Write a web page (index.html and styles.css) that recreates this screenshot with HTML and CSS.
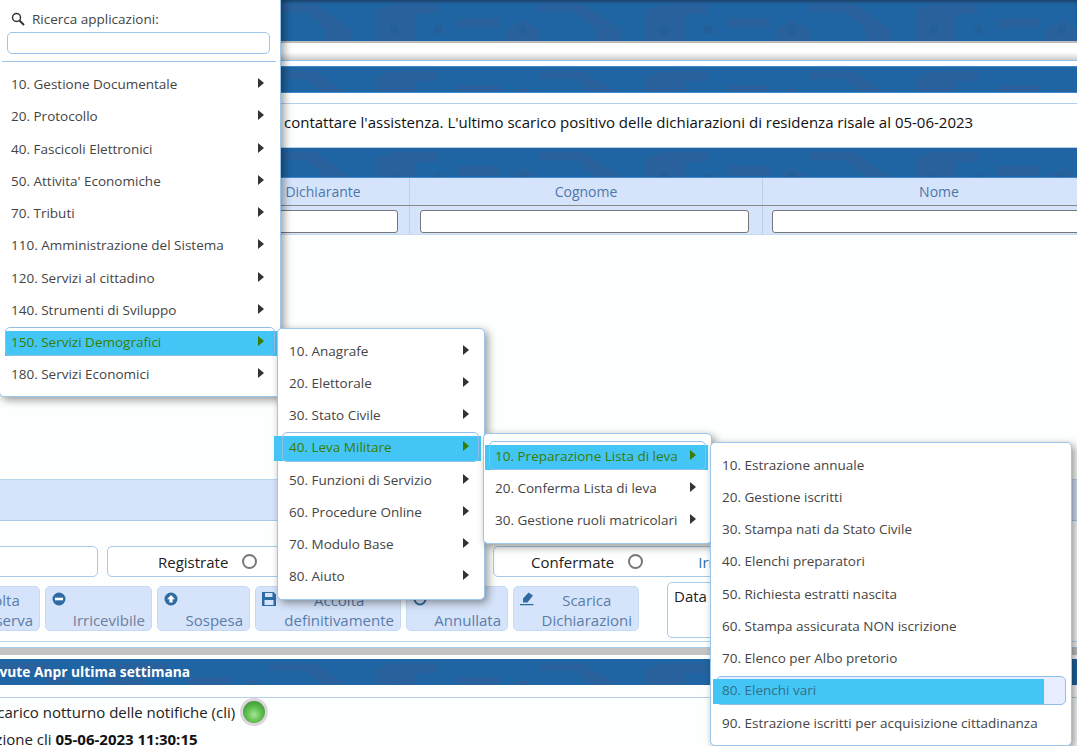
FILE: index.html
```html
<!DOCTYPE html>
<html>

<head>
    <title>Dichiarazioni di residenza</title>
    <meta name="viewport" content="width=device-width, initial-scale=1">
    <link rel="stylesheet" href="styles.css">
</head>

<body>

    <svg class="svg-defs" width="0" height="0">
        <defs>
            <pattern id="skyline" width="270" height="41" patternUnits="userSpaceOnUse">
                <path fill="#28619b" d="M0 4H44L82 30V41H56V30L36 12H0Z" />
                <path fill="#28619b" d="M106 10L124 4H168V14H146V41H106Z" />
                <path fill="#28619b" d="M188 18H230V28H188Z" />
                <path fill="#28619b" d="M236 30L252 20L270 30V41H236Z" />
                <circle fill="#235f98" cx="124" cy="30" r="5" />
                <circle fill="#235f98" cx="168" cy="30" r="5" />
                <circle fill="#235f98" cx="252" cy="30" r="5" />
            </pattern>
        </defs>
    </svg>

    <div class="band band-top"><svg class="band-art"><rect width="100%" height="100%" fill="url(#skyline)" /></svg></div>
    <div class="top-strip"></div>

    <div class="band band-title"><svg class="band-art"><rect width="100%" height="100%" fill="url(#skyline)" /></svg></div>

    <div class="message">contattare l'assistenza. L'ultimo scarico positivo delle dichiarazioni di residenza risale al 05-06-2023</div>

    <div class="band band-grid"><svg class="band-art"><rect width="100%" height="100%" fill="url(#skyline)" /></svg></div>

    <div class="grid-head">
        <div class="cell cell-first">Dichiarante</div>
        <div class="cell cell-second">Cognome</div>
        <div class="cell cell-third">Nome</div>
    </div>
    <div class="grid-filter">
        <div class="cell cell-first"><input type="text" class="filter-input"></div>
        <div class="cell cell-second"><input type="text" class="filter-input"></div>
        <div class="cell cell-third"><input type="text" class="filter-input"></div>
    </div>

    <div class="grid-empty"></div>
    <div class="pager"></div>

    <div class="radio-row">
        <div class="radio-box radio-box-first"></div>
        <div class="radio-box radio-box-second">
            <label class="radio-label">Registrate <span class="radio"></span></label>
        </div>
        <div class="radio-box radio-box-third">
            <label class="radio-label">Confermate <span class="radio"></span></label>
            <label class="radio-label radio-label-last">Irricevibili <span class="radio"></span></label>
        </div>
    </div>

    <div class="button-row">
        <a class="btn btn-cut"><span class="btn-label">Accolta<br>con riserva</span></a>
        <a class="btn btn-irr">
            <svg class="btn-icon" viewBox="0 0 14 14"><circle cx="7" cy="7" r="6.5" fill="#2f6ba3" /><rect x="3" y="5.7" width="8" height="2.6" fill="#fff" /></svg>
            <span class="btn-label">Irricevibile</span>
        </a>
        <a class="btn btn-sos">
            <svg class="btn-icon" viewBox="0 0 14 14"><circle cx="7" cy="7" r="6.5" fill="#2f6ba3" /><path fill="#fff" d="M7 3L11 7.2H8.6V10.5H5.4V7.2H3Z" /></svg>
            <span class="btn-label">Sospesa</span>
        </a>
        <a class="btn btn-acc">
            <svg class="btn-icon" viewBox="0 0 14 14"><path fill="#2f6ba3" fill-rule="evenodd" d="M0 0H11.5L14 2.5V14H0ZM3 1V5H10.5V1ZM2.5 8V13H11.5V8Z" /></svg>
            <span class="btn-label">Accolta<br>definitivamente</span>
        </a>
        <a class="btn btn-ann">
            <svg class="btn-icon" viewBox="0 0 14 14"><circle cx="7" cy="7" r="5.5" fill="none" stroke="#2f6ba3" stroke-width="2" /></svg>
            <span class="btn-label">Annullata</span>
        </a>
        <a class="btn btn-sca">
            <svg class="btn-icon" viewBox="0 0 14 14"><path fill="#2f6ba3" d="M8.5 0.5L13 3.5L7.5 10.5H3V6.5ZM0 12H13.5V13.2H0Z" /></svg>
            <span class="btn-label">Scarica<br>Dichiarazioni</span>
        </a>
        <div class="data-box">Data</div>
    </div>

    <div class="row-line"></div>
    <div class="row-split"></div>

    <div class="band band-bottom">
        <svg class="band-art"><rect width="100%" height="100%" fill="url(#skyline)" /></svg>
        <span class="band-text">Ricevute Anpr ultima settimana</span>
    </div>

    <div class="status">
        <div class="status-row">
            <span class="status-text status-night">Scarico notturno delle notifiche (cli)</span>
            <span class="led"></span>
        </div>
        <div class="status-row">
            <span class="status-text status-last">Ultima esecuzione cli <b>05-06-2023 11:30:15</b></span>
        </div>
    </div>

    <!-- menu applicazioni -->
    <div class="menu menu-apps">
        <div class="menu-search">
            <div class="search-title">
                <svg class="search-icon" viewBox="0 0 14 14"><circle cx="5.5" cy="5.5" r="4" fill="none" stroke="#333" stroke-width="1.5" /><path d="M8.5 8.5L13 13" stroke="#333" stroke-width="2" /></svg>
                Ricerca applicazioni:
            </div>
            <input type="text" class="search-input">
        </div>
        <div class="menu-item"><span>10. Gestione Documentale</span><i class="arrow"></i></div>
        <div class="menu-item"><span>20. Protocollo</span><i class="arrow"></i></div>
        <div class="menu-item"><span>40. Fascicoli Elettronici</span><i class="arrow"></i></div>
        <div class="menu-item"><span>50. Attivita' Economiche</span><i class="arrow"></i></div>
        <div class="menu-item"><span>70. Tributi</span><i class="arrow"></i></div>
        <div class="menu-item"><span>110. Amministrazione del Sistema</span><i class="arrow"></i></div>
        <div class="menu-item"><span>120. Servizi al cittadino</span><i class="arrow"></i></div>
        <div class="menu-item"><span>140. Strumenti di Sviluppo</span><i class="arrow"></i></div>
        <div class="menu-item active"><span>150. Servizi Demografici</span><i class="arrow"></i></div>
        <div class="menu-item"><span>180. Servizi Economici</span><i class="arrow"></i></div>
    </div>

    <div class="menu menu-demo">
        <div class="menu-item"><span>10. Anagrafe</span><i class="arrow"></i></div>
        <div class="menu-item"><span>20. Elettorale</span><i class="arrow"></i></div>
        <div class="menu-item"><span>30. Stato Civile</span><i class="arrow"></i></div>
        <div class="menu-item active"><span>40. Leva Militare</span><i class="arrow"></i></div>
        <div class="menu-item"><span>50. Funzioni di Servizio</span><i class="arrow"></i></div>
        <div class="menu-item"><span>60. Procedure Online</span><i class="arrow"></i></div>
        <div class="menu-item"><span>70. Modulo Base</span><i class="arrow"></i></div>
        <div class="menu-item"><span>80. Aiuto</span><i class="arrow"></i></div>
    </div>

    <div class="menu menu-leva">
        <div class="menu-item active"><span>10. Preparazione Lista di leva</span><i class="arrow"></i></div>
        <div class="menu-item"><span>20. Conferma Lista di leva</span><i class="arrow"></i></div>
        <div class="menu-item"><span>30. Gestione ruoli matricolari</span><i class="arrow"></i></div>
    </div>

    <div class="menu menu-lista">
        <div class="menu-item"><span>10. Estrazione annuale</span></div>
        <div class="menu-item"><span>20. Gestione iscritti</span></div>
        <div class="menu-item"><span>30. Stampa nati da Stato Civile</span></div>
        <div class="menu-item"><span>40. Elenchi preparatori</span></div>
        <div class="menu-item"><span>50. Richiesta estratti nascita</span></div>
        <div class="menu-item"><span>60. Stampa assicurata NON iscrizione</span></div>
        <div class="menu-item"><span>70. Elenco per Albo pretorio</span></div>
        <div class="menu-item hover"><span>80. Elenchi vari</span></div>
        <div class="menu-item"><span>90. Estrazione iscritti per acquisizione cittadinanza</span></div>
    </div>

</body>

</html>
```

FILE: styles.css
```css
html,
body {
    margin: 0;
    height: 746px;
    overflow: hidden;
}

body {
    position: relative;
    background-color: #fdfefe;
    font-family: "Open Sans", "Liberation Sans", sans-serif;
    font-size: 15px;
    color: #222;
}

.svg-defs {
    position: absolute;
}

/* fasce blu */
.band {
    position: relative;
    background-color: #1f65a3;
    overflow: hidden;
}

.band-art {
    position: absolute;
    left: 0;
    top: 0;
    width: 100%;
    height: 100%;
}

.band-top {
    height: 41px;
    box-shadow: inset 0 3px 3px -1px rgba(30, 50, 80, 0.7);
}

.top-strip {
    height: 17px;
    border-top: 2px solid #bbb;
    border-bottom: 1px solid #8fc4ea;
    background: linear-gradient(#fff 55%, #ccc);
}

.band-title {
    height: 25px;
    margin-top: 5px;
    border-top: 1px solid #3d8ad0;
    border-bottom: 1px solid #3d8ad0;
}

.message {
    margin-top: 10px;
    height: 45px;
    padding-left: 284px;
    border-top: 1px solid #b5cfe8;
    border-bottom: 1px solid #b5cfe8;
    line-height: 37px;
    color: #111;
    white-space: nowrap;
    box-sizing: border-box;
}

.band-grid {
    height: 30px;
    border-bottom: 1px solid #3d8ad0;
    box-sizing: border-box;
}

/* griglia */
.grid-head,
.grid-filter {
    display: grid;
    grid-template-columns: 410px 353px 353px;
    background-color: #d6e4fb;
}

.grid-head {
    height: 28px;
    border-bottom: 1px solid #888;
    box-sizing: border-box;
    color: #4f76a8;
    font-size: 14px;
    line-height: 27px;
    text-align: center;
}

.grid-filter {
    height: 29px;
    box-sizing: border-box;
    border-bottom: 1px solid #c5d9f0;
}

.cell {
    box-sizing: border-box;
    border-right: 1px solid #bcd2ec;
}

.grid-head .cell-first {
    padding-left: 237px;
}

.grid-filter .cell {
    padding: 4px 10px 0 10px;
}

.grid-filter .cell-first {
    padding-right: 11px;
}

.grid-filter .cell-second {
    padding-right: 13px;
}

.grid-filter .cell-third {
    padding-left: 9px;
}

.filter-input {
    display: block;
    width: 100%;
    height: 23px;
    box-sizing: border-box;
    border: 1px solid #777;
    border-radius: 3px;
    background-color: #fff;
}

.grid-empty {
    height: 244px;
}

.pager {
    height: 40px;
    background-color: #d6e4fb;
    border-top: 1px solid #bcd6ee;
    border-bottom: 1px solid #a9cbe8;
}

/* stati */
.radio-row {
    display: flex;
    gap: 9px;
    margin-top: 25px;
    margin-left: -102px;
}

.radio-box {
    display: flex;
    align-items: center;
    height: 31px;
    box-sizing: border-box;
    border: 1px solid #a9cbe8;
    border-radius: 5px;
    background-color: #fff;
    flex-shrink: 0;
}

.radio-box-first {
    width: 200px;
}

.radio-box-second {
    width: 377px;
    padding-left: 50px;
}

.radio-box-third {
    width: 377px;
    padding-left: 37px;
}

.radio-label {
    display: flex;
    align-items: center;
    gap: 14px;
    white-space: nowrap;
}

.radio-label-last {
    margin-left: 55px;
    color: #2a6fa8;
}

.radio {
    display: inline-block;
    width: 15px;
    height: 15px;
    box-sizing: border-box;
    border: 2px solid #777;
    border-radius: 50%;
}

/* pulsanti */
.button-row {
    display: flex;
    align-items: flex-start;
    gap: 5px;
    margin-top: 5px;
    margin-left: -60px;
}

.btn {
    display: flex;
    margin-top: 4px;
    height: 45px;
    box-sizing: border-box;
    padding: 4px 6px 0 6px;
    border: 1px solid #c5daf2;
    border-radius: 5px;
    background-color: #d6e4fb;
    color: #5a7da8;
    line-height: 20px;
    white-space: nowrap;
    flex-shrink: 0;
}

.btn-icon {
    width: 14px;
    height: 14px;
    margin-top: 1px;
    flex-shrink: 0;
}

.btn-label {
    margin-left: auto;
    align-self: flex-end;
    text-align: center;
}

.btn-cut {
    width: 100px;
}

.btn-irr {
    width: 107px;
    color: #6f7f9c;
}

.btn-sos {
    width: 93px;
}

.btn-acc {
    width: 146px;
}

.btn-ann {
    width: 102px;
}

.btn-sca {
    width: 126px;
}

.data-box {
    width: 200px;
    height: 56px;
    margin-left: 23px;
    padding: 3px 6px;
    box-sizing: border-box;
    border: 1px solid #a9cbe8;
    border-radius: 5px;
    background-color: #fff;
    flex-shrink: 0;
}

.row-line {
    height: 7px;
    margin-top: 3px;
    border-top: 1px solid #bcd6ee;
    border-bottom: 1px solid #a9cbe8;
    box-sizing: border-box;
}

.row-split {
    height: 11px;
    box-sizing: border-box;
    background: linear-gradient(#c4c4c4 60%, #fff 60%);
}

.band-bottom {
    height: 26px;
}

.band-text {
    position: relative;
    display: block;
    margin-left: -29px;
    font-size: 13.75px;
    line-height: 25px;
    color: #fff;
    font-weight: bold;
    white-space: nowrap;
}

.status {
    margin-top: 12px;
    border-top: 1px solid #b5cfe8;
}

.status-row {
    display: flex;
    align-items: center;
    height: 27px;
    white-space: nowrap;
}

.status-night {
    margin-left: -11px;
}

.status-last {
    margin-left: -95px;
}

.status-last b {
    color: #111;
}

.led {
    width: 28px;
    height: 28px;
    margin-left: 5px;
    box-sizing: border-box;
    border: 3px solid #dcd4dc;
    border-radius: 50%;
    background: radial-gradient(circle at 50% 62%, #a8e495 0, #62c152 40%, #2f8a2a 95%);
}

/* menu a tendina */
.menu {
    position: absolute;
    isolation: isolate;
    box-sizing: border-box;
    padding: 5.5px 0;
    border: 1px solid #9cc6ea;
    border-radius: 5px;
    background-color: #fff;
    box-shadow: 3px 3px 9px rgba(0, 0, 0, 0.4);
    color: #444;
    font-size: 13.5px;
}

.menu-apps {
    left: -1px;
    top: -6px;
    width: 282px;
    height: 403px;
    padding-top: 6px;
    --fill-left: 0;
    --fill-right: -4px;
}

.menu-demo {
    left: 277px;
    top: 328px;
    width: 208px;
    height: 272px;
    --fill-left: -8px;
    --fill-right: -2px;
}

.menu-leva {
    left: 483px;
    top: 433px;
    width: 229px;
    height: 111px;
    --fill-left: -4px;
    --fill-right: -2px;
}

.menu-lista {
    left: 710px;
    top: 442px;
    width: 362px;
    height: 304px;
}

.menu-search {
    height: 61px;
    margin: 0 4px 6px 2px;
    box-sizing: border-box;
    padding: 5px 2px 0;
    border-bottom: 1px solid #9cc6ea;
}

.search-title {
    display: flex;
    align-items: center;
    gap: 7px;
    height: 26px;
    padding-left: 7px;
}

.search-icon {
    width: 14px;
    height: 14px;
}

.search-input {
    display: block;
    width: 263px;
    height: 22px;
    margin-left: 3px;
    box-sizing: border-box;
    border: 1px solid #9cc6ea;
    border-radius: 5px;
    background-color: #fff;
}

.menu-item {
    position: relative;
    display: flex;
    align-items: center;
    justify-content: space-between;
    height: 32.25px;
    margin: 0 5px;
    padding: 0 10px 0 6px;
    box-sizing: border-box;
    white-space: nowrap;
}

.menu-apps .menu-item {
    padding-right: 11px;
}

.menu-demo .menu-item {
    margin-left: 4px;
    padding-left: 7px;
}

.arrow {
    width: 0;
    height: 0;
    margin-top: -2px;
    border-left: 6px solid #333;
    border-top: 5px solid transparent;
    border-bottom: 5px solid transparent;
}

.menu-item.active {
    color: #3a7d00;
}

.menu-item.active .arrow {
    border-left-color: #3a7d00;
}

.menu-item.active::before {
    content: "";
    position: absolute;
    z-index: -1;
    top: 5px;
    height: 25px;
    left: var(--fill-left);
    right: var(--fill-right);
    background-color: #43c6f6;
}

.menu-item.active::after {
    content: "";
    position: absolute;
    top: 1px;
    bottom: 2px;
    left: 0;
    right: 0;
    border: 1px solid #8fc0ea;
    border-radius: 5px;
}

.menu-item.hover {
    color: #336f86;
}

.menu-item.hover::before {
    content: "";
    position: absolute;
    z-index: -1;
    top: 5px;
    height: 25px;
    left: -3px;
    right: 22px;
    background-color: #43c6f6;
}

.menu-item.hover::after {
    content: "";
    position: absolute;
    z-index: -2;
    top: 2px;
    bottom: 2px;
    left: 0;
    right: 0;
    border: 1px solid #8fc0ea;
    border-radius: 5px;
    background-color: #e6eeff;
}
```
